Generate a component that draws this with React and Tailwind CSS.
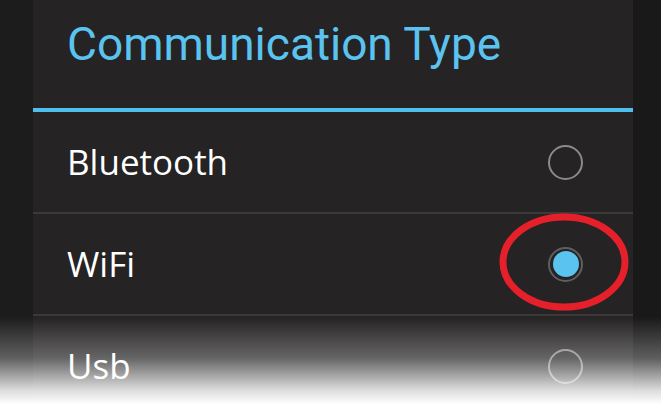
const options = [
  { label: "Bluetooth", checked: false },
  { label: "WiFi", checked: true },
  { label: "Usb", checked: false },
];

const Radio = ({ checked, highlight }) => (
  <div className="relative w-[35px] h-[35px] shrink-0">
    {checked ? (
      <div className="w-full h-full rounded-full border-2 border-[#5e5e5e] flex items-center justify-center">
        <div className="w-[26px] h-[26px] rounded-full bg-[#5bc3ef]"></div>
      </div>
    ) : (
      <div className="w-full h-full rounded-full border-2 border-[#8a8a8a]"></div>
    )}
    {highlight && (
      <svg
        className="absolute left-[-49px] top-[-34px]"
        width="130"
        height="98"
        viewBox="0 0 130 98"
      >
        <ellipse cx="65" cy="49" rx="61" ry="45" fill="none" stroke="#e5202a" strokeWidth="7" />
      </svg>
    )}
  </div>
);

export default function App() {
  return (
    <div className="relative flex w-full h-[409px] overflow-hidden bg-[#1c1b1b]">
      <div className="w-[33px] shrink-0 bg-[#1d1c1c]"></div>

      <div className="w-[600px] shrink-0 bg-[#252324] flex flex-col">
        <div className="h-[108px] shrink-0 pl-[34px] pt-[17px]">
          <h1 className="text-[46px] leading-[54px] text-[#5bc3ef] font-['Roboto',sans-serif]">
            Communication Type
          </h1>
        </div>
        <div className="h-[4px] shrink-0 bg-[#4fc0ee]"></div>

        {options.map((opt, i) => (
          <div key={opt.label} className="shrink-0">
            {i > 0 && <div className="h-[2px] bg-[#3b393a]"></div>}
            <div className="h-[100px] flex items-center justify-between pl-[34px] pr-[50px]">
              <span className="text-[35px] text-white font-['Open_Sans',sans-serif]">
                {opt.label}
              </span>
              <Radio checked={opt.checked} highlight={opt.checked} />
            </div>
          </div>
        ))}
      </div>

      <div className="flex-1 bg-[#1a1919]"></div>

      <div className="absolute inset-x-0 bottom-0 h-[92px] bg-[linear-gradient(to_bottom,rgba(255,255,255,0)_0%,rgba(255,255,255,0.3)_45%,rgba(255,255,255,0.85)_80%,#fff_95%)] pointer-events-none"></div>
    </div>
  );
}
